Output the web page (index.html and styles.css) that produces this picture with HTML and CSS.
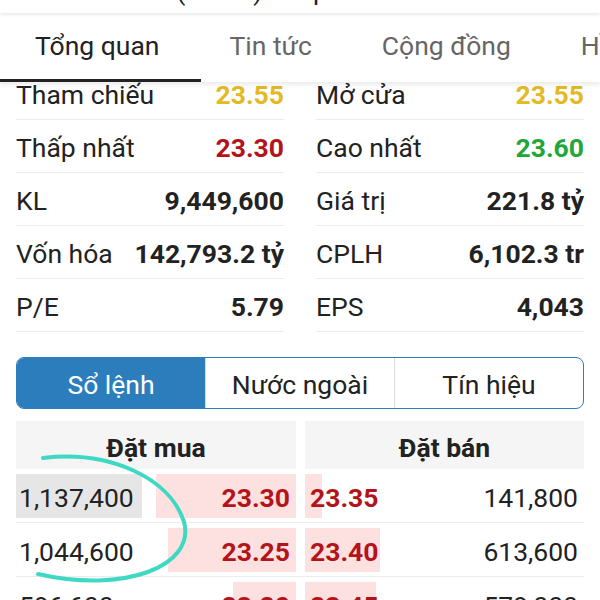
FILE: index.html
```html
<!DOCTYPE html>
<html lang="vi">
<head>
  <meta charset="UTF-8">
  <title>HPG - Tổng quan</title>
  <link rel="stylesheet" href="styles.css">
</head>
<body>

<!-- Stock title bar (scrolled mostly out of view) -->
<div class="top-bar">
  <span class="top-title">HPG (HOSE) Thép Hòa Phát</span>
</div>

<!-- Main tabs -->
<nav class="tabs">
  <div class="tab active">Tổng quan</div>
  <div class="tab">Tin tức</div>
  <div class="tab">Cộng đồng</div>
  <div class="tab">Hồ sơ</div>
</nav>

<!-- Overview numbers -->
<div class="stats">
  <div class="stat-row"><span class="label">Tham chiếu</span><span class="value ref">23.55</span></div>
  <div class="stat-row"><span class="label">Mở cửa</span><span class="value ref">23.55</span></div>
  <div class="stat-row"><span class="label">Thấp nhất</span><span class="value down">23.30</span></div>
  <div class="stat-row"><span class="label">Cao nhất</span><span class="value up">23.60</span></div>
  <div class="stat-row"><span class="label">KL</span><span class="value">9,449,600</span></div>
  <div class="stat-row"><span class="label">Giá trị</span><span class="value">221.8 tỷ</span></div>
  <div class="stat-row"><span class="label">Vốn hóa</span><span class="value">142,793.2 tỷ</span></div>
  <div class="stat-row"><span class="label">CPLH</span><span class="value">6,102.3 tr</span></div>
  <div class="stat-row"><span class="label">P/E</span><span class="value">5.79</span></div>
  <div class="stat-row"><span class="label">EPS</span><span class="value">4,043</span></div>
</div>

<!-- Segment switch -->
<div class="segment">
  <div class="seg-btn active">Sổ lệnh</div>
  <div class="seg-btn">Nước ngoài</div>
  <div class="seg-btn">Tín hiệu</div>
</div>

<!-- Order book -->
<div class="book">
  <div class="book-head">
    <div class="head-cell">Đặt mua</div>
    <div class="head-cell">Đặt bán</div>
  </div>

  <div class="book-row">
    <div class="side buy">
      <span class="bar" style="width: 50%"></span>
      <span class="vol changed">1,137,400</span>
      <span class="price">23.30</span>
    </div>
    <div class="side sell">
      <span class="bar" style="width: 6%"></span>
      <span class="price">23.35</span>
      <span class="vol">141,800</span>
    </div>
  </div>

  <div class="book-row">
    <div class="side buy">
      <span class="bar" style="width: 45.7%"></span>
      <span class="vol">1,044,600</span>
      <span class="price">23.25</span>
    </div>
    <div class="side sell">
      <span class="bar" style="width: 27%"></span>
      <span class="price">23.40</span>
      <span class="vol">613,600</span>
    </div>
  </div>

  <div class="book-row">
    <div class="side buy">
      <span class="bar" style="width: 22.5%"></span>
      <span class="vol">596,600</span>
      <span class="price">23.20</span>
    </div>
    <div class="side sell">
      <span class="bar" style="width: 25.5%"></span>
      <span class="price">23.45</span>
      <span class="vol">579,000</span>
    </div>
  </div>
</div>

<!-- Hand-drawn marker over the buy volumes -->
<svg class="scribble" width="600" height="600" viewBox="0 0 600 600">
  <path d="M43 458 C110 450 170 478 184 522 C196 566 124 594 38 574" fill="none" stroke="#3fd9c3" stroke-width="4" stroke-linecap="round"/>
</svg>

</body>
</html>
```

FILE: styles.css
```css
body {
  margin: 0;
  width: 600px;
  height: 600px;
  overflow: hidden;
  position: relative;
  font-family: Roboto, "Noto Sans", sans-serif;
  font-size: 26.5px;
  color: #222;
  background: #fff;
}
.top-bar {
  height: 13px;
  overflow: hidden;
  display: flex;
  align-items: flex-end;
  justify-content: center;
  box-shadow: 0 1px 4px rgba(0, 0, 0, 0.12);
  position: relative;
  z-index: 2;
  background: #fff;
}
.top-title {
  line-height: 24px;
  margin-bottom: 10px;
  padding-right: 40px;
  color: #222;
}
.tabs {
  display: flex;
  height: 69px;
  white-space: nowrap;
  background: #fff;
  position: relative;
  z-index: 1;
  box-shadow: 0 3px 5px rgba(0, 0, 0, 0.08);
}
.tab {
  padding: 0 35px;
  line-height: 66px;
  color: #666;
  border-bottom: 3px solid transparent;
}
.tab.active {
  color: #222;
  border-bottom-color: #222;
  padding-right: 42px;
}
.tab.active + .tab {
  padding-left: 28px;
}
.stats {
  display: grid;
  grid-template-columns: 1fr 1fr;
  column-gap: 32px;
  padding: 0 16px;
  margin-top: -15px;
}
.stat-row {
  display: flex;
  justify-content: space-between;
  align-items: center;
  height: 53px;
  padding-top: 2px;
  box-sizing: border-box;
  border-bottom: 1px solid #ececec;
  white-space: nowrap;
}
.value {
  font-weight: bold;
}
.ref {
  color: #e3b925;
}
.down {
  color: #b31319;
}
.up {
  color: #20a738;
}
.segment {
  display: flex;
  margin: 25px 16px 0;
  height: 52px;
  box-sizing: border-box;
  border: 1px solid #2b7dbb;
  border-radius: 8px;
  overflow: hidden;
}
.seg-btn {
  flex: 1;
  display: flex;
  align-items: center;
  justify-content: center;
  padding-top: 2px;
  border-left: 1px solid #dcdcdc;
}
.seg-btn:first-child {
  border-left: none;
}
.seg-btn.active {
  background: #2b7dbb;
  color: #fff;
}
.book {
  margin: 12px 16px 0;
}
.book-head {
  display: grid;
  grid-template-columns: 280px 279px;
  column-gap: 9px;
}
.head-cell {
  height: 48px;
  line-height: 54px;
  text-align: center;
  font-weight: bold;
  background: #f5f5f5;
}
.book-row {
  display: grid;
  grid-template-columns: 280px 279px;
  column-gap: 9px;
  height: 54px;
  box-sizing: border-box;
  padding: 5px 0 4px;
  border-bottom: 1px solid #ececec;
}
.side {
  position: relative;
  display: flex;
  justify-content: space-between;
  align-items: center;
  white-space: nowrap;
}
.bar {
  position: absolute;
  top: 0;
  bottom: 0;
  background: #fde0e0;
}
.buy .bar {
  right: 0;
}
.sell .bar {
  left: 0;
}
.vol,
.price {
  position: relative;
  padding-top: 2px;
}
.price {
  font-weight: bold;
  color: #b31319;
}
.buy .price {
  padding-right: 6px;
}
.sell .price {
  padding-left: 5px;
}
.buy .vol {
  padding-left: 3px;
}
.sell .vol {
  padding-right: 6px;
}
.vol.changed {
  background: #e6e6e6;
  align-self: stretch;
  display: flex;
  align-items: center;
  padding-right: 8px;
}
.scribble {
  position: absolute;
  left: 0;
  top: 0;
  pointer-events: none;
}
```
